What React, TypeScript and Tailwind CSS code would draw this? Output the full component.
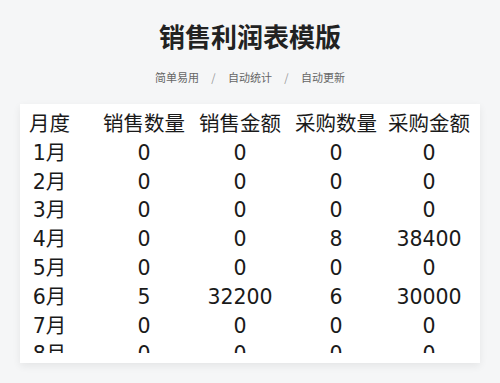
import React from 'react';

const rows = [
  { m: '1月', a: 0, b: 0, c: 0, d: 0 },
  { m: '2月', a: 0, b: 0, c: 0, d: 0 },
  { m: '3月', a: 0, b: 0, c: 0, d: 0 },
  { m: '4月', a: 0, b: 0, c: 8, d: 38400 },
  { m: '5月', a: 0, b: 0, c: 0, d: 0 },
  { m: '6月', a: 5, b: 32200, c: 6, d: 30000 },
  { m: '7月', a: 0, b: 0, c: 0, d: 0 },
  { m: '8月', a: 0, b: 0, c: 0, d: 0 },
  { m: '9月', a: 0, b: 0, c: 0, d: 0 },
];

const headers = ['销售数量', '销售金额', '采购数量', '采购金额'];

export default function App() {
  return (
    <div className="w-[500px] h-[383px] bg-[#f5f6f7] overflow-hidden font-['Noto_Sans_CJK_SC',sans-serif]">
      {/* 标题 */}
      <div className="pt-[18px] text-center">
        <h1 className="text-[26px] leading-[36px] font-bold text-[#222]">销售利润表模版</h1>
        <div className="mt-[14px] flex justify-center items-center text-[11px] leading-[18px] text-[#666]">
          <span>简单易用</span>
          <span className="w-[29px] text-center text-[#999]">/</span>
          <span>自动统计</span>
          <span className="w-[29px] text-center text-[#999]">/</span>
          <span>自动更新</span>
        </div>
      </div>

      {/* 表格卡片 */}
      <div className="mx-[20px] mt-[18px] bg-white pt-[6px] pb-[10px] shadow-[0_3px_8px_rgba(0,0,0,0.07)]">
        <div className="h-[243px] overflow-hidden pl-[9px] text-[20.5px] leading-[28.8px] text-[#1a1a1a] font-['DejaVu_Sans','Noto_Sans_CJK_SC',sans-serif]">
          <div className="grid grid-cols-[74px_96px_96px_93px_82px]">
            <div className="w-[41px] text-center">月度</div>
            {headers.map((h) => (
              <div key={h} className="w-[82px] text-center whitespace-nowrap">{h}</div>
            ))}
          </div>
          {rows.map((r) => (
            <div key={r.m} className="grid grid-cols-[74px_96px_96px_93px_82px]">
              <div className="w-[41px] text-center whitespace-nowrap">{r.m}</div>
              <div className="w-[82px] text-center">{r.a}</div>
              <div className="w-[82px] text-center">{r.b}</div>
              <div className="w-[82px] text-center">{r.c}</div>
              <div className="w-[82px] text-center">{r.d}</div>
            </div>
          ))}
        </div>
      </div>
    </div>
  );
}
